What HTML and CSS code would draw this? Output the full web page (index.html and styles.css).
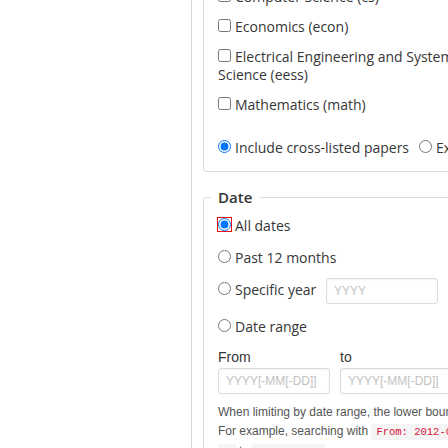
FILE: index.html
```html
<!DOCTYPE html>
<html lang="en">
<head>
<meta charset="utf-8">
<title>Advanced Search</title>
<link rel="stylesheet" href="styles.css">
</head>
<body>
<div class="page">
  <aside class="side"></aside>
  <main class="main">
    <fieldset class="box">
      <legend class="legend">Subject</legend>
      <div class="cols">
        <div class="col">
          <label class="check"><input type="checkbox">Computer Science (cs)</label>
          <label class="check"><input type="checkbox">Economics (econ)</label>
          <label class="check"><input type="checkbox">Electrical Engineering and Systems Science (eess)</label>
          <label class="check"><input type="checkbox">Mathematics (math)</label>
        </div>
        <div class="col">
          <label class="check"><input type="checkbox">Physics</label>
          <label class="check"><input type="checkbox">Quantitative Biology (q-bio)</label>
          <label class="check"><input type="checkbox">Quantitative Finance (q-fin)</label>
          <label class="check"><input type="checkbox">Statistics (stat)</label>
        </div>
      </div>
      <div class="crosslist">
        <label class="radio"><input type="radio" name="cross" checked>Include cross-listed papers</label>
        <label class="radio next"><input type="radio" name="cross">Exclude cross-listed papers</label>
      </div>
    </fieldset>

    <fieldset class="box date">
      <legend class="legend">Date</legend>
      <div class="radios">
        <label class="radio"><input type="radio" name="date" class="marked" checked>All dates</label>
        <label class="radio"><input type="radio" name="date">Past 12 months</label>
        <label class="radio year"><input type="radio" name="date">Specific year <input class="input year-input" type="text" placeholder="YYYY"></label>
        <label class="radio"><input type="radio" name="date">Date range</label>
      </div>
      <div class="range">
        <div class="field">
          <label class="flabel">From</label>
          <input class="input" type="text" placeholder="YYYY[-MM[-DD]]">
        </div>
        <div class="field">
          <label class="flabel">to</label>
          <input class="input" type="text" placeholder="YYYY[-MM[-DD]]">
        </div>
      </div>
      <p class="help">When limiting by date range, the lower bound of the 'from' date and the upper bound of the 'to' date are used.<br>For example, searching with <code>From: 2012-02</code> and <code>To: 2013</code> will search for papers submitted from <code>2012-02-01</code> to <code>2013-12-31</code>.</p>
    </fieldset>
  </main>
</div>
</body>
</html>
```
FILE: styles.css
```css
html, body {
  margin: 0;
  padding: 0;
  background: #fff;
  overflow: hidden;
}
body {
  font-family: "Open Sans", "Noto Sans", sans-serif;
  font-size: 14px;
  color: #363636;
}
.page {
  display: flex;
  width: 900px;
}
.side {
  width: 191px;
  flex: none;
}
.main {
  flex: 1;
  border-left: 1px solid #dbdbdb;
  padding-left: 11px;
  margin-top: -42px;
  min-height: 600px;
}
.box {
  margin: 0;
  border: 1px solid #dbdbdb;
  border-radius: 3px;
  padding: 10px 14px 14px;
  min-width: 0;
}
.date {
  margin-top: 15px;
}
.legend {
  font-size: 15px;
  font-weight: 600;
  line-height: 20px;
  padding: 0 8px 0 7px;
  margin-left: -7px;
}
.cols {
  display: flex;
  margin-bottom: 25px;
}
.col {
  width: 280px;
  display: flex;
  flex-direction: column;
  gap: 12px;
}
.check, .radio {
  display: block;
  line-height: 18px;
}
.check input, .radio input[type="radio"] {
  margin: 0 4px 0 0;
  width: 13px;
  height: 13px;
  vertical-align: baseline;
}
.crosslist {
  display: flex;
}
.crosslist .radio.next {
  margin-left: 10px;
}
.marked {
  outline: 1px solid #e8141b;
  outline-offset: 0;
}
.radios {
  display: flex;
  flex-direction: column;
  gap: 14px;
}
.radios .year {
  margin-top: -3px;
}
.input {
  box-sizing: border-box;
  width: 112px;
  height: 26px;
  border: 1px solid #dbdbdb;
  border-radius: 3px;
  padding: 0 7px;
  font-family: "Liberation Sans", Arial, sans-serif;
  font-size: 12px;
  color: #363636;
  background: #fff;
  box-shadow: inset 0 1px 2px rgba(10, 10, 10, 0.06);
}
.input::placeholder {
  color: #c2c2c2;
}
.year-input {
  margin-left: 6px;
  vertical-align: middle;
}
.range {
  display: flex;
  gap: 10px;
  margin-top: 12px;
}
.field {
  display: flex;
  flex-direction: column;
  gap: 2px;
}
.flabel {
  font-family: "Liberation Sans", Arial, sans-serif;
  font-size: 14px;
  line-height: 18px;
  color: #363636;
}
.help {
  width: 600px;
  margin: 9px 0 0;
  font-family: "Liberation Sans", Arial, sans-serif;
  font-size: 12px;
  line-height: 19px;
  color: #555;
}
.help code {
  font-family: "Liberation Mono", "Courier New", monospace;
  font-size: 10.5px;
  color: #da1039;
  background: #f5f5f5;
  padding: 2px 5px;
}
```
